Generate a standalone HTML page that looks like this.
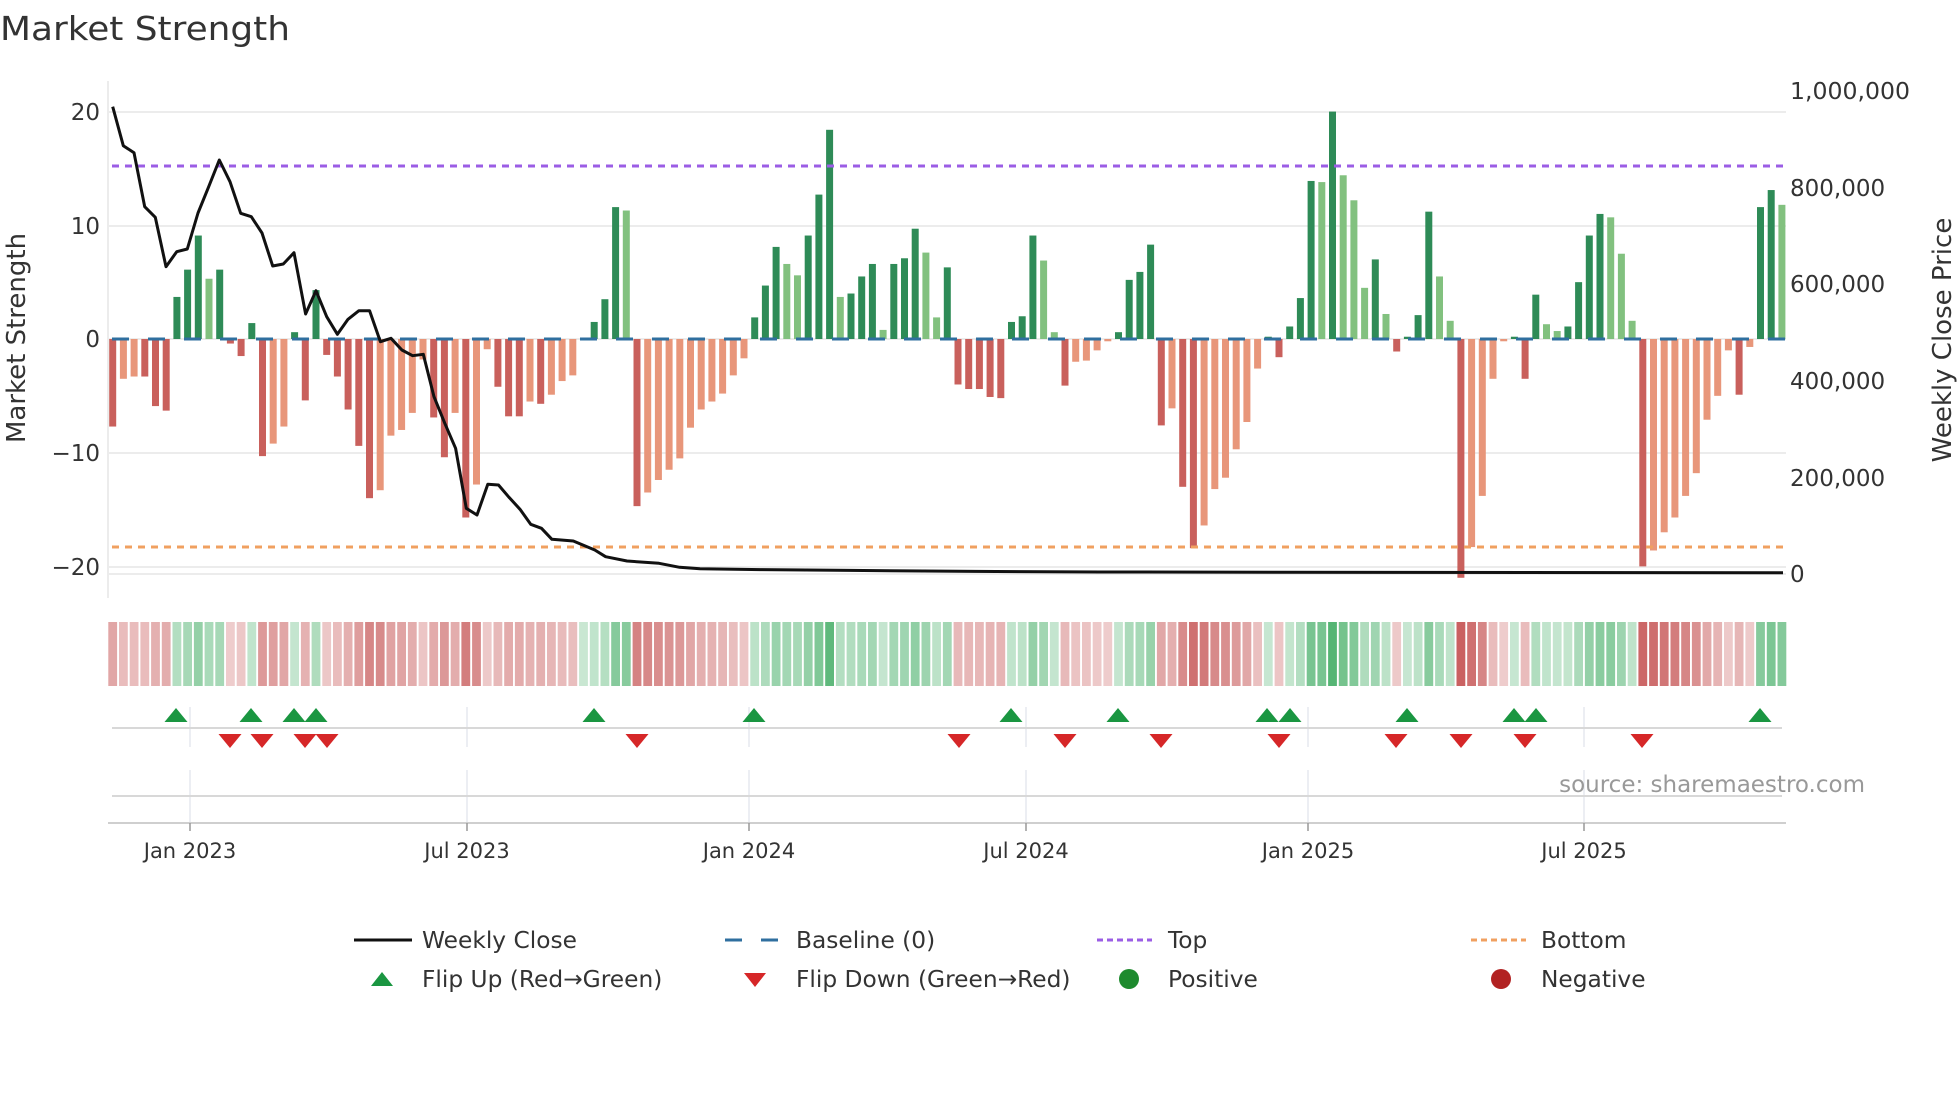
<!DOCTYPE html>
<html><head><meta charset="utf-8">
<style>
html,body{margin:0;padding:0;background:#fff;}
svg{display:block;}
text{font-family:"DejaVu Sans","Liberation Sans",sans-serif;fill:#333;}
</style></head>
<body>
<svg id="s" width="1960" height="1102" viewBox="0 0 1960 1102" xmlns="http://www.w3.org/2000/svg">
<text x="0" y="40" font-size="33" textLength="290" lengthAdjust="spacingAndGlyphs">Market Strength</text>
<line x1="108" y1="81" x2="108" y2="598" stroke="#e5e5e5" stroke-width="1.5"/>
<g stroke="#ececec" stroke-width="2">
<line x1="108" y1="112" x2="1786" y2="112"/>
<line x1="108" y1="226" x2="1786" y2="226"/>
<line x1="108" y1="339" x2="1786" y2="339"/>
<line x1="108" y1="453" x2="1786" y2="453"/>
<line x1="108" y1="567" x2="1786" y2="567"/>
<line x1="108" y1="574" x2="1786" y2="574"/>
</g>
<g font-size="23" text-anchor="end">
<text x="100" y="120">20</text>
<text x="100" y="234">10</text>
<text x="100" y="347">0</text>
<text x="100" y="461">−10</text>
<text x="100" y="575">−20</text>
</g>
<g font-size="23">
<text x="1790" y="99" textLength="120" lengthAdjust="spacingAndGlyphs">1,000,000</text>
<text x="1790" y="196">800,000</text>
<text x="1790" y="292">600,000</text>
<text x="1790" y="389">400,000</text>
<text x="1790" y="486">200,000</text>
<text x="1790" y="582">0</text>
</g>
<text transform="translate(25,338) rotate(-90)" font-size="26" text-anchor="middle">Market Strength</text>
<text transform="translate(1951,340) rotate(-90)" font-size="26" text-anchor="middle">Weekly Close Price</text>
<g id="bars"></g>
<line x1="112" y1="166" x2="1786" y2="166" stroke="#9b5de5" stroke-width="3" stroke-dasharray="7,6"/>
<line x1="112" y1="547" x2="1786" y2="547" stroke="#f0a060" stroke-width="3" stroke-dasharray="7,6"/>
<line x1="112" y1="339" x2="1786" y2="339" stroke="#2f6f9f" stroke-width="3" stroke-dasharray="17,19"/>
<polyline fill="none" stroke="#111" stroke-width="3" stroke-linejoin="round" points="112.7,106.7 123.3,145.7 134,152.7 144.7,206.7 155.3,217.3 166,266.7 176.7,251.7 187.3,249 198,213 208.7,186.7 219.3,160 230,181.7 240.7,213.3 251.3,216.7 262,233 272.7,266 283.3,264 294,252.7 305.6,314 316,290.7 326.7,316.7 337.4,334.3 348,319.3 358.9,310.7 369.6,310.7 380.4,341.7 391,338.3 401.9,350 412.6,355.7 423.3,354.3 434,396.7 444.8,423.3 455.6,448.3 466.3,508.3 477,515 487.8,484.3 498.5,485 509,497.3 520,509.3 530.7,524.3 541.5,528.3 551.9,539.3 573.3,541 594.8,550 605.6,556.7 627,561 659,563.3 679.6,567.3 700,568.7 760,569.6 850,570.4 975,571.4 1100,572 1400,572.4 1783,572.7"/>
<g id="heat"></g>
<g stroke="#e6e9ef" stroke-width="1.5">
<line x1="190" y1="707" x2="190" y2="747"/><line x1="190" y1="770" x2="190" y2="823"/>
<line x1="467" y1="707" x2="467" y2="747"/><line x1="467" y1="770" x2="467" y2="823"/>
<line x1="749" y1="707" x2="749" y2="747"/><line x1="749" y1="770" x2="749" y2="823"/>
<line x1="1026" y1="707" x2="1026" y2="747"/><line x1="1026" y1="770" x2="1026" y2="823"/>
<line x1="1308" y1="707" x2="1308" y2="747"/><line x1="1308" y1="770" x2="1308" y2="823"/>
<line x1="1584" y1="707" x2="1584" y2="747"/><line x1="1584" y1="770" x2="1584" y2="823"/>
</g>
<line x1="112" y1="728" x2="1782" y2="728" stroke="#d8d8d8" stroke-width="2"/>
<line x1="112" y1="796" x2="1782" y2="796" stroke="#d8d8d8" stroke-width="2"/>
<line x1="108" y1="823" x2="1786" y2="823" stroke="#cfcfcf" stroke-width="2"/>
<g stroke="#999" stroke-width="1.5">
<line x1="190" y1="823" x2="190" y2="831"/><line x1="467" y1="823" x2="467" y2="831"/><line x1="749" y1="823" x2="749" y2="831"/><line x1="1026" y1="823" x2="1026" y2="831"/><line x1="1308" y1="823" x2="1308" y2="831"/><line x1="1584" y1="823" x2="1584" y2="831"/>
</g>
<g id="flips"></g>
<g font-size="21" text-anchor="middle">
<text x="190" y="858">Jan 2023</text>
<text x="467" y="858">Jul 2023</text>
<text x="749" y="858">Jan 2024</text>
<text x="1026" y="858">Jul 2024</text>
<text x="1308" y="858">Jan 2025</text>
<text x="1584" y="858">Jul 2025</text>
</g>
<text x="1865" y="792" font-size="23" text-anchor="end" style="fill:#999">source: sharemaestro.com</text>
<g font-size="23.3">
<line x1="354" y1="940" x2="412" y2="940" stroke="#111" stroke-width="3"/>
<text x="422" y="948">Weekly Close</text>
<line x1="725" y1="940" x2="781" y2="940" stroke="#2f6f9f" stroke-width="3" stroke-dasharray="17,19"/>
<text x="796" y="948">Baseline (0)</text>
<line x1="1097" y1="940" x2="1152" y2="940" stroke="#9b5de5" stroke-width="3" stroke-dasharray="6,4"/>
<text x="1168" y="948">Top</text>
<line x1="1471" y1="940" x2="1526" y2="940" stroke="#f0a060" stroke-width="3" stroke-dasharray="6,4"/>
<text x="1541" y="948">Bottom</text>
<polygon points="371,986 393,986 382,972" fill="#1a9641"/>
<text x="422" y="987">Flip Up (Red→Green)</text>
<polygon points="744,973 766,973 755,987" fill="#d62728"/>
<text x="796" y="987">Flip Down (Green→Red)</text>
<circle cx="1129" cy="979" r="10" fill="#1e8a2e"/>
<text x="1168" y="987">Positive</text>
<circle cx="1501" cy="979" r="10" fill="#b22222"/>
<text x="1541" y="987">Negative</text>
</g>
</svg>
<script>
var V=[-7.7,-3.5,-3.3,-3.3,-5.9,-6.3,3.7,6.1,9.1,5.3,6.1,-0.4,-1.5,1.4,-10.3,-9.2,-7.7,0.6,-5.4,4.3,-1.4,-3.3,-6.2,-9.4,-14.0,-13.3,-8.5,-8.0,-6.5,-1.8,-6.9,-10.4,-6.5,-15.7,-12.8,-0.9,-4.2,-6.8,-6.8,-5.5,-5.7,-4.9,-3.7,-3.2,0.1,1.5,3.5,11.6,11.3,-14.7,-13.5,-12.4,-11.5,-10.5,-7.8,-6.2,-5.5,-4.8,-3.2,-1.7,1.9,4.7,8.1,6.6,5.6,9.1,12.7,18.4,3.7,4.0,5.5,6.6,0.8,6.6,7.1,9.7,7.6,1.9,6.3,-4.0,-4.4,-4.4,-5.1,-5.2,1.5,2.0,9.1,6.9,0.6,-4.1,-2.0,-1.9,-1.0,-0.2,0.6,5.2,5.9,8.3,-7.6,-6.1,-13.0,-18.4,-16.4,-13.2,-12.2,-9.7,-7.3,-2.6,0.2,-1.6,1.1,3.6,13.9,13.8,20.0,14.4,12.2,4.5,7.0,2.2,-1.1,0.2,2.1,11.2,5.5,1.6,-21.0,-18.3,-13.8,-3.5,-0.2,0.2,-3.5,3.9,1.3,0.7,1.1,5.0,9.1,11.0,10.7,7.5,1.6,-20.0,-18.6,-17.0,-15.7,-13.8,-11.8,-7.1,-5.0,-1.0,-4.9,-0.7,11.6,13.1,11.8];
var L=[1,2,9,15,16,25,26,27,28,29,32,34,35,39,41,42,43,48,50,51,52,53,54,55,56,57,58,59,63,64,68,72,76,77,87,88,90,91,92,93,99,102,103,104,105,106,107,113,115,116,117,119,124,125,127,128,129,130,134,135,140,141,142,144,145,146,147,148,149,150,151,153,156];
var ns="http://www.w3.org/2000/svg";
function el(t,a,p){var e=document.createElementNS(ns,t);for(var k in a)e.setAttribute(k,a[k]);p.appendChild(e);return e;}
var bars=document.getElementById('bars'),heat=document.getElementById('heat'),flips=document.getElementById('flips');
var x0=112.7,p=10.7,z=339,s=11.37;
for(var i=0;i<V.length;i++){
 var v=V[i],cx=x0+p*i,lt=L.indexOf(i)>=0,h=Math.abs(v)*s;
 var c=v>=0?(lt?'#82c17f':'#2e8b57'):(lt?'#e8967a':'#c9605c');
 el('rect',{x:cx-3.5,y:v>=0?z-h:z,width:7,height:Math.max(h,0.5),fill:c},bars);
 var t=Math.min(1,Math.abs(v)/21),a=0.28+0.62*t;
 var hc=v>=0?'rgba(60,170,95,'+a.toFixed(2)+')':'rgba(196,80,80,'+a.toFixed(2)+')';
 el('rect',{x:cx-4.4,y:622,width:8.8,height:64,fill:hc},heat);
}
var up=[176,251,294,316,594,754,1011,1118,1267,1290,1407,1514,1536,1760];
var dn=[230,262,305,327,637,959,1065,1161,1279,1396,1461,1525,1642];
up.forEach(function(x){el('polygon',{points:(x-11.5)+',722 '+(x+11.5)+',722 '+x+',708',fill:'#1a9641'},flips);});
dn.forEach(function(x){el('polygon',{points:(x-11.5)+',734 '+(x+11.5)+',734 '+x+',748',fill:'#d62728'},flips);});
</script>
</body></html>
